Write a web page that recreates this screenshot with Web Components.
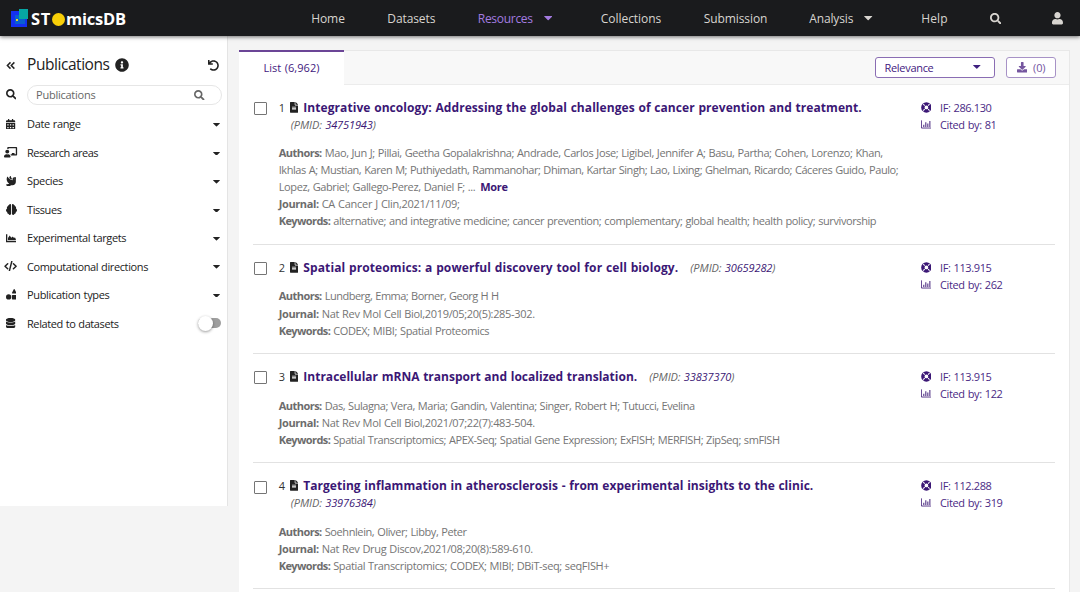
<!DOCTYPE html>
<html lang="en">
<head>
<meta charset="utf-8">
<title>STomicsDB - Publications</title>
<style>
    html, body { margin: 0; height: 100%; overflow: hidden; }
    body {
        background: #f4f4f4;
        color: #222;
        font: 11px/17.1px "Open Sans", "Noto Sans", sans-serif;
        word-spacing: .5px;
    }
</style>
</head>
<body>
<publications-page></publications-page>

<script>

// icons: [viewBox width, viewBox height, markup]

const icons = {
    search: [512, 512, '<path d="M505 442.700L405.300 343c-4.500-4.500-10.600-7-17-7H372c27.600-35.300 44-79.700 44-128C416 93.100 322.900 0 208 0S0 93.100 0 208s93.100 208 208 208c48.300 0 92.700-16.400 128-44v16.300c0 6.400 2.500 12.500 7 17l99.700 99.700c9.400 9.400 24.600 9.400 33.900 0l28.300-28.300c9.400-9.400 9.400-24.600.1-34zM208 336c-70.700 0-128-57.200-128-128 0-70.700 57.200-128 128-128 70.700 0 128 57.200 128 128 0 70.700-57.200 128-128 128z"/>'],
    user: [448, 512, '<path d="M224 256c70.700 0 128-57.300 128-128S294.700 0 224 0 96 57.300 96 128s57.300 128 128 128zm89.600 32h-16.700c-22.200 10.200-46.900 16-72.900 16s-50.600-5.800-72.900-16h-16.700C60.200 288 0 348.200 0 422.400V464c0 26.500 21.500 48 48 48h352c26.500 0 48-21.500 48-48v-41.600c0-74.200-60.200-134.400-134.400-134.400z"/>'],
    info: [512, 512, '<path d="M256 8C119 8 8 119 8 256s111 248 248 248 248-111 248-248S393 8 256 8zm0 110c23.200 0 42 18.800 42 42s-18.800 42-42 42-42-18.800-42-42 18.800-42 42-42zm56 254c0 6.600-5.400 12-12 12h-88c-6.600 0-12-5.400-12-12v-24c0-6.600 5.400-12 12-12h12v-64h-12c-6.600 0-12-5.400-12-12v-24c0-6.600 5.400-12 12-12h64c6.600 0 12 5.400 12 12v100h12c6.600 0 12 5.400 12 12v24z"/>'],
    undo: [512, 512, '<path d="M212.300 224.300H12c-6.600 0-12-5.400-12-12V12C0 5.400 5.400 0 12 0h48c6.600 0 12 5.400 12 12v78.100C117.800 39.300 184.300 7.500 258.200 8c136.900 1 246.400 111.600 246.100 248.500C504 393.300 393.100 504 256.300 504c-64.100 0-122.500-24.300-166.500-64.200-5.100-4.600-5.300-12.600-.5-17.400l34-34c4.500-4.500 11.700-4.700 16.400-.5C170.800 415.300 211.600 432 256.300 432c97.300 0 176-78.700 176-176 0-97.300-78.700-176-176-176-58.500 0-110.300 28.500-142.300 72.300h98.300c6.600 0 12 5.400 12 12v48c0 6.600-5.400 12-12 12z"/>'],
    collapse: [448, 512, '<path d="M210 110L65 256l145 146M390 110L245 256l145 146" fill="none" stroke="currentColor" stroke-width="68"/>'],
    calendar: [448, 512, '<path fill-rule="evenodd" d="M48 64h48V16q0-16 16-16h32q16 0 16 16v48h128V16q0-16 16-16h32q16 0 16 16v48h48q48 0 48 48v48H0v-48q0-48 48-48zM0 192h448v272q0 48-48 48H48q-48 0-48-48zM64 256v64h64v-64zm128 0v64h64v-64zm128 0v64h64v-64zM64 384v64h64v-64zm128 0v64h64v-64zm128 0v64h64v-64z"/>'],
    teacher: [640, 512, '<path d="M208 352c-2.400 0-4.800.4-7 1.100-13 4.200-26.600 6.900-41 6.900s-28-2.700-41-6.900c-2.200-.7-4.600-1.100-7-1.100C49.900 352-.3 402.500 0 464.600.1 490.900 21.700 512 48 512h224c26.300 0 47.900-21.100 48-47.400.3-62.100-49.900-112.600-112-112.600zm-48-32c53 0 96-43 96-96s-43-96-96-96-96 43-96 96 43 96 96 96zM592 0H208c-26.500 0-48 22.300-48 49.600V96c23.400 0 45.100 6.800 64 17.800V64h352v288h-64v-64H384v64h-76.200c19.100 16.700 33.100 38.700 39.700 64H592c26.500 0 48-22.300 48-49.600V49.600C640 22.300 618.500 0 592 0z"/>'],
    dove: [512, 512, '<path d="M288 167.200v-28.100c-28.200-36.300-47.100-79.300-54.100-125.200-2.100-13.500-19-18.800-27.800-8.300-21.100 24.900-37.700 54.100-48.900 86.500 34.200 38.300 80 64.600 130.800 75.100zM400 64c-44.200 0-80 35.900-80 80.100v59.400C215.600 197.300 127 133 87 41.300c-5.500-12.500-23.200-13.200-29-.9C41.400 76 32 115.200 32 156.600c0 70.800 34.100 136.900 85.100 185.900 13.200 12.700 26.100 23.200 38.900 32.800l-143.900 36C1.400 414-3.400 426.400 2.600 435.700 20 462.600 63 508.200 155.800 512c8 .3 16-2.600 22.100-7.900l65.200-56.100H320c88.400 0 160-71.500 160-159.900V128l32-64H400zm0 96.100c-8.800 0-16-7.200-16-16s7.200-16 16-16 16 7.200 16 16-7.200 16-16 16z"/>'],
    brain: [512, 512, '<path d="M236 55v402c0 32-24 55-55 55-29 0-52-19-59-45-38-4-67-33-67-69 0-7 1-14 3-20C24 363 0 328 0 288c0-36 20-68 49-84-17-38 0-81 38-96-1-32 22-62 56-65C150 16 168 0 190 0c27 0 46 22 46 55zM276 55v402c0 32 24 55 55 55 29 0 52-19 59-45 38-4 67-33 67-69 0-7-1-14-3-20 34-15 58-50 58-90 0-36-20-68-49-84 17-38 0-81-38-96 1-32-22-62-56-65C362 16 344 0 322 0c-27 0-46 22-46 55z"/>'],
    area: [512, 512, '<path d="M0 64h64v320h448v64H0zM96 352V240l76-110q9-13 18 2l66 105 62-60q10-9 18 2l56 70 32-30q9-7 16 4l40 80v49z"/>'],
    code: [640, 512, '<path d="M180 130L50 256l130 126M460 130l130 126-130 126M380 20L260 492" fill="none" stroke="currentColor" stroke-width="72" stroke-linecap="round" stroke-linejoin="round"/>'],
    shapes: [512, 512, '<circle cx="128" cy="384" r="128"/><rect x="288" y="288" width="224" height="224" rx="32"/><path d="M379 15q21-30 42 0l88 166q10 31-21 43H312q-31-12-21-43z"/>'],
    database: [448, 512, '<path d="M448 73.100v45.800C448 159.100 347.700 192 224 192S0 159.100 0 118.900V73.100C0 32.900 100.300 0 224 0s224 32.900 224 73.100zM448 176v102.900C448 319.100 347.700 352 224 352S0 319.100 0 278.900V176c48.100 33.100 136.200 48.600 224 48.600S399.900 209.100 448 176zm0 160v102.900C448 479.100 347.700 512 224 512S0 479.100 0 438.900V336c48.100 33.100 136.200 48.600 224 48.600S399.900 369.100 448 336z"/>'],
    file: [384, 512, '<path d="M224 136V0H24C10.700 0 0 10.700 0 24v464c0 13.300 10.700 24 24 24h336c13.300 0 24-10.700 24-24V160H248c-13.200 0-24-10.800-24-24zm64 236c0 6.600-5.400 12-12 12H108c-6.600 0-12-5.400-12-12v-8c0-6.600 5.400-12 12-12h168c6.600 0 12 5.400 12 12v8zm0-64c0 6.600-5.400 12-12 12H108c-6.600 0-12-5.400-12-12v-8c0-6.600 5.400-12 12-12h168c6.600 0 12 5.400 12 12v8zm0-72v8c0 6.600-5.400 12-12 12H108c-6.600 0-12-5.400-12-12v-8c0-6.600 5.400-12 12-12h168c6.600 0 12 5.400 12 12zm96-114.100v6.100H256V0h6.100c6.400 0 12.500 2.500 17 7l97.900 98c4.500 4.500 7 10.600 7 16.900z"/>'],
    ring: [512, 512, '<path fill-rule="evenodd" d="M256 8a248 248 0 1 0 0 496 248 248 0 1 0 0-496zM256 168a88 88 0 1 1 0 176 88 88 0 1 1 0-176z"/><path d="M176 176L106 106M336 176l70-70M176 336l-70 70M336 336l70 70" stroke="#fff" stroke-width="50"/>'],
    chart: [512, 512, '<path d="M20 64v364h492" fill="none" stroke="currentColor" stroke-width="40"/><path d="M110 270h46v114h-46zM206 150h46v234h-46zM302 210h46v174h-46zM398 100h46v284h-46z"/>'],
    download: [512, 512, '<path d="M216 0h80c13.300 0 24 10.700 24 24v168h87.700c17.800 0 26.700 21.500 14.100 34.100L269.700 378.300c-7.500 7.500-19.800 7.500-27.300 0L90.100 226.100c-12.600-12.600-3.700-34.100 14.100-34.100H192V24c0-13.300 10.700-24 24-24zm296 376v112c0 13.300-10.700 24-24 24H24c-13.300 0-24-10.700-24-24V376c0-13.300 10.700-24 24-24h146.700l49 49c20.100 20.100 52.500 20.100 72.600 0l49-49H488c13.300 0 24 10.700 24 24z"/>'],
    caret: [10, 5, '<path d="M.6 0h8.800q.9 0 .3.700L5.600 4.700q-.6.600-1.200 0L.3.700Q-.3 0 .6 0z"/>']
};

class UiIcon extends HTMLElement {

    connectedCallback() {
        const [w, h, markup] = icons[this.getAttribute('name')];
        const size = this.getAttribute('size') || 11;
        this.attachShadow({mode: 'open'}).innerHTML = `
            <style>
                :host { display: inline-flex; flex: none; justify-content: center; align-items: center; }
                svg { display: block; fill: currentColor; }
            </style>
            <svg viewBox="0 0 ${w} ${h}" height="${size}" width="${size * w / h}">${markup}</svg>
        `;
    }
}

customElements.define('ui-icon', UiIcon);

// one line of text, spaced so that it fills the given width

class TextRun extends HTMLElement {

    connectedCallback() {
        this.attachShadow({mode: 'open'}).innerHTML = `
            <style>
                :host { display: inline-block; white-space: pre; }
            </style>
            <slot></slot>
        `.replace(/\n\s*/g, '');

        const width = parseFloat(this.getAttribute('w'));
        if(width){
            const natural = this.getBoundingClientRect().width;
            this.style.letterSpacing = (width - natural) / this.textContent.length + 'px';
        }
    }
}

customElements.define('text-run', TextRun);

class SiteLogo extends HTMLElement {

    connectedCallback() {
        this.attachShadow({mode: 'open'}).innerHTML = `
            <style>
                :host { display: flex; align-items: center; color: #fff; font: 700 16.5px/20px "Open Sans", sans-serif; padding-top: 2px; }
                svg { margin: -2px 3px 0 0; }
                i { width: 13px; height: 13px; border-radius: 50%; background: #f8cf08; margin: 0 1px; }
            </style>
            <svg width="17" height="18" viewBox="0 0 17 18">
                <path fill="#1430f0" d="M0 2h16v16H0z"/>
                <path fill="#0a5fd0" d="M4 6h10v9H4z"/>
                <path fill="#06a6a3" d="M8 0h9v10H8z"/>
                <path fill="#e8dc20" d="M5 10h2v2H5z"/>
            </svg>
            <text-run w="20">ST</text-run><i></i><text-run w="60">micsDB</text-run>
        `;
    }
}

customElements.define('site-logo', SiteLogo);

class NavLink extends HTMLElement {

    connectedCallback() {
        this.attachShadow({mode: 'open'}).innerHTML = `
            <style>
                :host { display: flex; align-items: center; color: #d8d5d0; font-size: 12px; }
                :host([active]) { color: #a47be0; }
                ui-icon { margin-left: 11px; }
            </style>
            <text-run w="${this.getAttribute('w')}">${this.getAttribute('label')}</text-run>
            ${this.hasAttribute('menu') ? '<ui-icon name="caret" size="4.200"></ui-icon>' : ''}
        `;
    }
}

customElements.define('nav-link', NavLink);

class SiteHeader extends HTMLElement {

    connectedCallback() {
        this.attachShadow({mode: 'open'}).innerHTML = `
            <style>
                :host {
                    display: flex; align-items: center; height: 36px; box-sizing: border-box;
                    padding: 0 17px 0 11px; background: #1a1b1d; color: #d8d5d0;
                    box-shadow: 0 1px 4px rgba(0, 0, 0, .55); position: relative; z-index: 1;
                }
                nav { display: grid; grid-template-columns: 76px 90.500px 123px 103px 105.500px 112px 68.500px 62.300px auto; margin-left: auto; padding-top: 1px; align-items: center; }
                .find { display: flex; }
            </style>
            <site-logo></site-logo>
            <nav>
                <nav-link label="Home" w="33.500"></nav-link>
                <nav-link label="Datasets" w="48"></nav-link>
                <nav-link label="Resources" w="55" active menu></nav-link>
                <nav-link label="Collections" w="60.500"></nav-link>
                <nav-link label="Submission" w="63.500"></nav-link>
                <nav-link label="Analysis" w="44" menu></nav-link>
                <nav-link label="Help" w="26.500"></nav-link>
                <div class="find"><ui-icon name="search" size="11.500"></ui-icon></div>
                <ui-icon name="user" size="12.500"></ui-icon>
            </nav>
        `;
    }
}

customElements.define('site-header', SiteHeader);

class FilterRow extends HTMLElement {

    connectedCallback() {
        const toggle = this.hasAttribute('toggle');
        this.attachShadow({mode: 'open'}).innerHTML = `
            <style>
                :host { display: flex; align-items: center; height: 28.450px; }
                .icon { width: 22px; margin-right: 5px; }
                text-run { margin-right: auto; }
                .caret { margin-right: 7px; padding-top: 2px; }
                .toggle { display: flex; align-items: center; width: 23px; height: 10.500px; border-radius: 6px; background: #9e9e9e; margin-right: 6px; }
                .toggle i { width: 15px; height: 15px; border-radius: 50%; background: #fff; box-shadow: 0 1px 3px rgba(0, 0, 0, .4); }
            </style>
            <ui-icon class="icon" name="${this.getAttribute('icon')}" size="${this.getAttribute('size') || 10.5}"></ui-icon>
            <text-run w="${this.getAttribute('w')}">${this.getAttribute('label')}</text-run>
            ${toggle ? '<span class="toggle"><i></i></span>' : '<ui-icon class="caret" name="caret" size="3.500"></ui-icon>'}
        `;
    }
}

customElements.define('filter-row', FilterRow);

class FilterPanel extends HTMLElement {

    connectedCallback() {
        this.attachShadow({mode: 'open'}).innerHTML = `
            <style>
                :host { display: block; width: 227px; height: 470px; background: #fff; border-right: 1px solid #e4e4e4; color: #222; }
                .title { display: flex; align-items: center; height: 30px; padding-top: 14px; font-size: 15.500px; }
                .title .fold { width: 22px; margin-right: 5px; }
                .title .info { margin-left: 5px; margin-right: auto; }
                .title .undo { margin-right: 8.500px; }
                .find { display: flex; align-items: center; height: 29px; padding-bottom: .8px; }
                .find > ui-icon { width: 22px; margin-right: 5px; }
                .box {
                    display: flex; align-items: center; justify-content: space-between; flex: 1; height: 20px; box-sizing: border-box;
                    margin-right: 5.500px; padding: 1px 16px 0 8px; border: 1px solid #e6e6e6; border-radius: 10px; color: #666;
                }
            </style>
            <div class="title">
                <ui-icon class="fold" name="collapse" size="11"></ui-icon>
                <text-run w="82.500">Publications</text-run>
                <ui-icon class="info" name="info" size="14"></ui-icon>
                <ui-icon class="undo" name="undo" size="11"></ui-icon>
            </div>
            <div class="find">
                <ui-icon name="search" size="10.500"></ui-icon>
                <div class="box">
                    <text-run w="59.500">Publications</text-run>
                    <ui-icon name="search" size="10.500"></ui-icon>
                </div>
            </div>
            <filter-row icon="calendar" label="Date range" w="53.500"></filter-row>
            <filter-row icon="teacher" label="Research areas" w="71"></filter-row>
            <filter-row icon="dove" label="Species" w="36"></filter-row>
            <filter-row icon="brain" size="11" label="Tissues" w="34.500"></filter-row>
            <filter-row icon="area" label="Experimental targets" w="99"></filter-row>
            <filter-row icon="code" label="Computational directions" w="121"></filter-row>
            <filter-row icon="shapes" label="Publication types" w="82.500"></filter-row>
            <filter-row icon="database" label="Related to datasets" w="91.500" toggle></filter-row>
        `;
    }
}

customElements.define('filter-panel', FilterPanel);

// publications, each text together with its width

const publications = [
    {
        title: ['Integrative oncology: Addressing the global challenges of cancer prevention and treatment.', 558.5],
        pmid: '34751943',
        below: true,
        authors: [
            ['Mao, Jun J; Pillai, Geetha Gopalakrishna; Andrade, Carlos Jose; Ligibel, Jennifer A; Basu, Partha; Cohen, Lorenzo; Khan,', 558],
            ['Ikhlas A; Mustian, Karen M; Puthiyedath, Rammanohar; Dhiman, Kartar Singh; Lao, Lixing; Ghelman, Ricardo; Cáceres Guido, Paulo;', 619.5],
            ['Lopez, Gabriel; Gallego-Perez, Daniel F; ...', 196.5]
        ],
        more: true,
        journal: ['CA Cancer J Clin,2021/11/09;', 138],
        keywords: ['alternative; and integrative medicine; cancer prevention; complementary; global health; health policy; survivorship', 543],
        factor: ['IF: 286.130', 51.5],
        cited: ['Cited by: 81', 56.5]
    },
    {
        title: ['Spatial proteomics: a powerful discovery tool for cell biology.', 375],
        pmid: '30659282',
        authors: [['Lundberg, Emma; Borner, Georg H H', 174]],
        journal: ['Nat Rev Mol Cell Biol,2019/05;20(5):285-302.', 213],
        keywords: ['CODEX; MIBI; Spatial Proteomics', 156],
        factor: ['IF: 113.915', 51.5],
        cited: ['Cited by: 262', 62.5]
    },
    {
        title: ['Intracellular mRNA transport and localized translation.', 334],
        pmid: '33837370',
        authors: [['Das, Sulagna; Vera, Maria; Gandin, Valentina; Singer, Robert H; Tutucci, Evelina', 370]],
        journal: ['Nat Rev Mol Cell Biol,2021/07;22(7):483-504.', 213],
        keywords: ['Spatial Transcriptomics; APEX-Seq; Spatial Gene Expression; ExFISH; MERFISH; ZipSeq; smFISH', 446.5],
        factor: ['IF: 113.915', 51.5],
        cited: ['Cited by: 122', 62.5]
    },
    {
        title: ['Targeting inflammation in atherosclerosis - from experimental insights to the clinic.', 510],
        pmid: '33976384',
        below: true,
        authors: [['Soehnlein, Oliver; Libby, Peter', 142]],
        journal: ['Nat Rev Drug Discov,2021/08;20(8):589-610.', 211],
        keywords: ['Spatial Transcriptomics; CODEX; MIBI; DBiT-seq; seqFISH+', 276],
        factor: ['IF: 112.288', 51.5],
        cited: ['Cited by: 319', 62.5]
    }
];

const run = ([text, width]) => `<text-run w="${width}">${text}</text-run>`;

class PublicationItem extends HTMLElement {

    connectedCallback() {
        const index = Number(this.getAttribute('index'));
        const item = publications[index];
        const pmid = `<span class="pmid"><text-run w="34.500">(PMID: </text-run><b><text-run w="47.500">${item.pmid}</text-run></b>)</span>`;
        const [first, ...rest] = item.authors;

        this.attachShadow({mode: 'open'}).innerHTML = `
            <style>
                :host { display: flex; align-items: flex-start; padding: 14.200px 0 14.250px; border-bottom: 1px solid #e2e2e2; color: #757575; }
                .check { width: 11px; height: 11px; border: 1px solid #757575; border-radius: 1px; margin: 3.300px 12px 0 1px; flex: none; }
                .main { width: 641px; margin-left: -.3px; }
                .row { display: flex; align-items: center; height: 17.060px; white-space: pre; }
                .num { width: 11.500px; color: #333; }
                .row ui-icon { color: #222; margin-right: 5px; }
                .title { color: #3b1775; font-weight: 700; font-size: 12px; }
                .pmid { font-style: italic; color: #666; }
                .pmid b { color: #3b1775; font-weight: 400; }
                .row .pmid { margin-left: 12px; }
                .body { margin-top: 11.500px; }
                .body strong { font-weight: 700; color: #6c6c6c; margin-right: 3px; }
                .more { color: #3b1775; font-weight: 700; margin-left: 5px; }
                .side { color: #4a2a85; margin-left: .3px; }
                .side .row ui-icon { color: #3b1775; width: 12px; margin-right: 8px; }
            </style>
            <span class="check"></span>
            <div class="main">
                <div class="row"><span class="num">${index + 1}</span><ui-icon name="file" size="10.800"></ui-icon><span class="title">${run(item.title)}</span>${item.below ? '' : pmid}</div>
                ${item.below ? `<div class="row">${pmid}</div>` : ''}
                <div class="body">
                    <div class="row"><strong><text-run w="43">Authors:</text-run></strong>${run(first)}</div>
                    ${rest.map((line, i) => `<div class="row">${run(line)}${item.more && i == rest.length - 1 ? '<span class="more"><text-run w="27.500">More</text-run></span>' : ''}</div>`).join('')}
                    <div class="row"><strong><text-run w="40">Journal:</text-run></strong>${run(item.journal)}</div>
                    <div class="row"><strong><text-run w="51.500">Keywords:</text-run></strong>${run(item.keywords)}</div>
                </div>
            </div>
            <div class="side">
                <div class="row"><ui-icon name="ring" size="10.800"></ui-icon>${run(item.factor)}</div>
                <div class="row"><ui-icon name="chart" size="10.800"></ui-icon>${run(item.cited)}</div>
            </div>
        `;
    }
}

customElements.define('publication-item', PublicationItem);

class ListToolbar extends HTMLElement {

    connectedCallback() {
        this.attachShadow({mode: 'open'}).innerHTML = `
            <style>
                :host { display: flex; align-items: center; height: 34.500px; box-sizing: border-box; background: #f8f8f8; border-top: 1px solid #e8e8e8; border-bottom: 1px solid #ececec; color: #3f2080; }
                .tab { align-self: stretch; margin: -1px auto -1px 0; width: 105px; box-sizing: border-box; display: flex; align-items: center; justify-content: center; background: #fff; border-top: 2px solid #6b4596; padding-bottom: 2px; }
                .select, .download { display: flex; align-items: center; box-sizing: border-box; height: 20.500px; border: 1px solid #8a6db3; border-radius: 3px; background: #fff; }
                .select { width: 120px; justify-content: space-between; padding: 0 13px 0 8.500px; }
                .download { width: 50px; margin: 0 13px 0 11px; justify-content: center; gap: 6px; color: #75569f; border-color: #a792c6; }
            </style>
            <div class="tab"><text-run w="56">List (6,962)</text-run></div>
            <div class="select"><text-run w="49">Relevance</text-run><ui-icon name="caret" size="3.800"></ui-icon></div>
            <div class="download"><ui-icon name="download" size="10.500"></ui-icon><text-run w="12.500">(0)</text-run></div>
        `;
    }
}

customElements.define('list-toolbar', ListToolbar);

class PublicationsPage extends HTMLElement {

    connectedCallback() {
        this.attachShadow({mode: 'open'}).innerHTML = `
            <style>
                :host { display: block; height: 592px; overflow: hidden; }
                main { display: flex; align-items: flex-start; }
                .card { width: 831px; box-sizing: border-box; margin: 14px 0 0 11px; background: #fff; border-right: 1px solid #e8e8e8; }
                .list { padding: 0 14px 20px; }
            </style>
            <site-header></site-header>
            <main>
                <filter-panel></filter-panel>
                <div class="card">
                    <list-toolbar></list-toolbar>
                    <div class="list">
                        ${publications.map((item, i) => `<publication-item index="${i}"></publication-item>`).join('')}
                    </div>
                </div>
            </main>
        `;
    }
}

customElements.define('publications-page', PublicationsPage);

</script>
</body>
</html>
